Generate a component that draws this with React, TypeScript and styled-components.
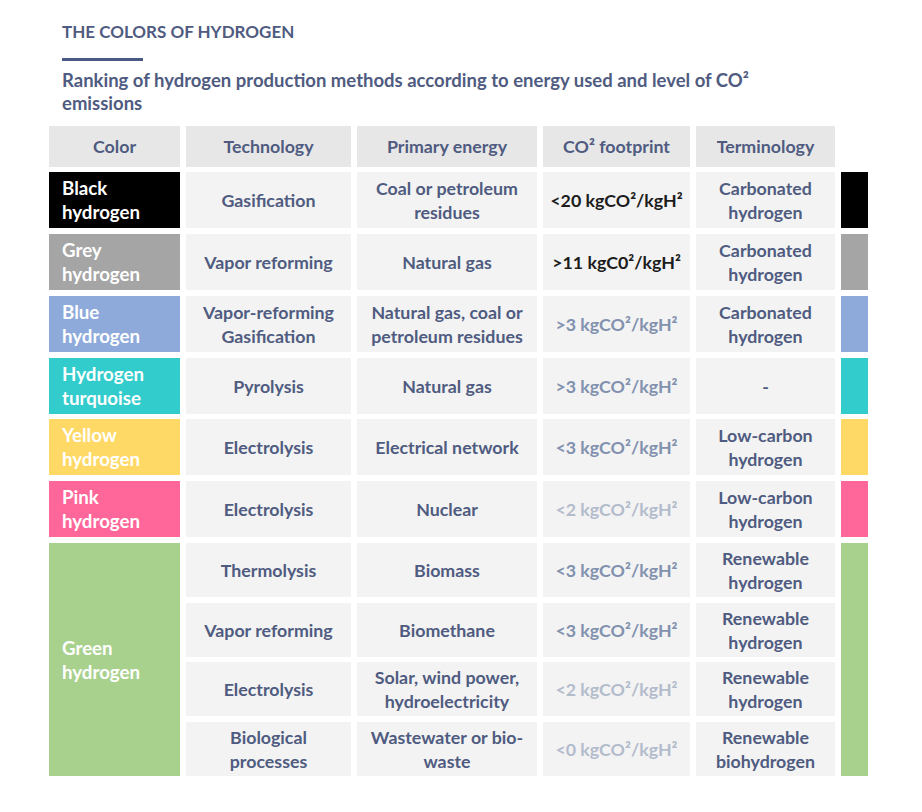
import React from "react";
import styled, { createGlobalStyle } from "styled-components";

const Global = createGlobalStyle`
  html, body { margin: 0; padding: 0; background: #ffffff; }
  body { font-family: Lato, "Open Sans", "Liberation Sans", sans-serif; }
`;

const Page = styled.div`
  width: 922px;
  min-height: 812px;
  box-sizing: border-box;
  padding: 19.7px 0 0 49px;
`;

const Heading = styled.header`
  padding-left: 13px;
  display: flex;
  flex-direction: column;
  align-items: flex-start;
`;

const Title = styled.h1`
  margin: 0;
  font-size: 17px;
  line-height: 24px;
  font-weight: 700;
  color: #4f5b80;
`;

const Rule = styled.div`
  margin-top: 14px;
  width: 81px;
  height: 3px;
  background: #4a5886;
`;

const Subtitle = styled.h2`
  margin: 8.1px 0 0 0;
  max-width: 720px;
  font-size: 18.5px;
  line-height: 23px;
  font-weight: 700;
  color: #4f5b80;
`;

const Table = styled.div`
  margin-top: 10.9px;
  display: grid;
  grid-template-columns: 131px 165px 180px 147px 139px 27px;
  grid-template-rows: 41px repeat(6, 56px) repeat(4, 54px);
  column-gap: 6px;
  row-gap: 5.75px;
`;

const HeadCell = styled.div`
  background: #e7e7e7;
  display: flex;
  align-items: center;
  justify-content: center;
  font-size: 17.8px;
  font-weight: 700;
  color: #4f5b80;
`;

const Blank = styled.div``;

const ColorCell = styled.div<{ $bg: string; $span?: number }>`
  background: ${(p) => p.$bg};
  grid-row: span ${(p) => p.$span ?? 1};
  grid-column: 1;
  display: flex;
  align-items: center;
  padding-left: 13px;
  font-size: 18.7px;
  line-height: 24px;
  font-weight: 700;
  color: #ffffff;
`;

const Cell = styled.div`
  background: #f3f3f3;
  display: flex;
  align-items: center;
  justify-content: center;
  text-align: center;
  padding: 0 4px;
  font-size: 17.8px;
  line-height: 24px;
  font-weight: 700;
  color: #4f5b80;
`;

const toneColor = {
  dark: "#1c1c1c",
  mid: "#8191ae",
  light: "#b3bccc",
} as const;

type Tone = keyof typeof toneColor;

const Co2Cell = styled(Cell)<{ $tone: Tone }>`
  color: ${(p) => toneColor[p.$tone]};
`;

const Swatch = styled.div<{ $bg: string; $span?: number }>`
  background: ${(p) => p.$bg};
  grid-row: span ${(p) => p.$span ?? 1};
  grid-column: 6;
`;

type Sub = {
  tech: React.ReactNode;
  energy: React.ReactNode;
  co2: string;
  tone: Tone;
  term: React.ReactNode;
};

type Group = { name: React.ReactNode; bg: string; rows: Sub[] };

const groups: Group[] = [
  {
    name: <>Black<br />hydrogen</>,
    bg: "#000000",
    rows: [
      {
        tech: "Gasification",
        energy: <>Coal or petroleum<br />residues</>,
        co2: "<20 kgCO²/kgH²",
        tone: "dark",
        term: <>Carbonated<br />hydrogen</>,
      },
    ],
  },
  {
    name: <>Grey<br />hydrogen</>,
    bg: "#a5a5a5",
    rows: [
      {
        tech: "Vapor reforming",
        energy: "Natural gas",
        co2: ">11 kgC0²/kgH²",
        tone: "dark",
        term: <>Carbonated<br />hydrogen</>,
      },
    ],
  },
  {
    name: <>Blue<br />hydrogen</>,
    bg: "#8eaadb",
    rows: [
      {
        tech: <>Vapor-reforming<br />Gasification</>,
        energy: <>Natural gas, coal or<br />petroleum residues</>,
        co2: ">3 kgCO²/kgH²",
        tone: "mid",
        term: <>Carbonated<br />hydrogen</>,
      },
    ],
  },
  {
    name: <>Hydrogen<br />turquoise</>,
    bg: "#33cccc",
    rows: [
      {
        tech: "Pyrolysis",
        energy: "Natural gas",
        co2: ">3 kgCO²/kgH²",
        tone: "mid",
        term: "-",
      },
    ],
  },
  {
    name: <>Yellow<br />hydrogen</>,
    bg: "#ffd966",
    rows: [
      {
        tech: "Electrolysis",
        energy: "Electrical network",
        co2: "<3 kgCO²/kgH²",
        tone: "mid",
        term: <>Low-carbon<br />hydrogen</>,
      },
    ],
  },
  {
    name: <>Pink<br />hydrogen</>,
    bg: "#ff6699",
    rows: [
      {
        tech: "Electrolysis",
        energy: "Nuclear",
        co2: "<2 kgCO²/kgH²",
        tone: "light",
        term: <>Low-carbon<br />hydrogen</>,
      },
    ],
  },
  {
    name: <>Green<br />hydrogen</>,
    bg: "#a9d18e",
    rows: [
      {
        tech: "Thermolysis",
        energy: "Biomass",
        co2: "<3 kgCO²/kgH²",
        tone: "mid",
        term: <>Renewable<br />hydrogen</>,
      },
      {
        tech: "Vapor reforming",
        energy: "Biomethane",
        co2: "<3 kgCO²/kgH²",
        tone: "mid",
        term: <>Renewable<br />hydrogen</>,
      },
      {
        tech: "Electrolysis",
        energy: <>Solar, wind power,<br />hydroelectricity</>,
        co2: "<2 kgCO²/kgH²",
        tone: "light",
        term: <>Renewable<br />hydrogen</>,
      },
      {
        tech: <>Biological<br />processes</>,
        energy: <>Wastewater or bio-<br />waste</>,
        co2: "<0 kgCO²/kgH²",
        tone: "light",
        term: <>Renewable<br />biohydrogen</>,
      },
    ],
  },
];

export default function App() {
  return (
    <Page>
      <Global />
      <Heading>
        <Title>THE COLORS OF HYDROGEN</Title>
        <Rule />
        <Subtitle>
          Ranking of hydrogen production methods according to energy used and level of CO² emissions
        </Subtitle>
      </Heading>
      <Table>
        <HeadCell>Color</HeadCell>
        <HeadCell>Technology</HeadCell>
        <HeadCell>Primary energy</HeadCell>
        <HeadCell>CO² footprint</HeadCell>
        <HeadCell>Terminology</HeadCell>
        <Blank />
        {groups.map((g, gi) => (
          <React.Fragment key={gi}>
            {g.rows.map((r, ri) => (
              <React.Fragment key={ri}>
                {ri === 0 && (
                  <ColorCell $bg={g.bg} $span={g.rows.length}>
                    <span>{g.name}</span>
                  </ColorCell>
                )}
                <Cell><span>{r.tech}</span></Cell>
                <Cell><span>{r.energy}</span></Cell>
                <Co2Cell $tone={r.tone}><span>{r.co2}</span></Co2Cell>
                <Cell><span>{r.term}</span></Cell>
                {ri === 0 && <Swatch $bg={g.bg} $span={g.rows.length} />}
              </React.Fragment>
            ))}
          </React.Fragment>
        ))}
      </Table>
    </Page>
  );
}
